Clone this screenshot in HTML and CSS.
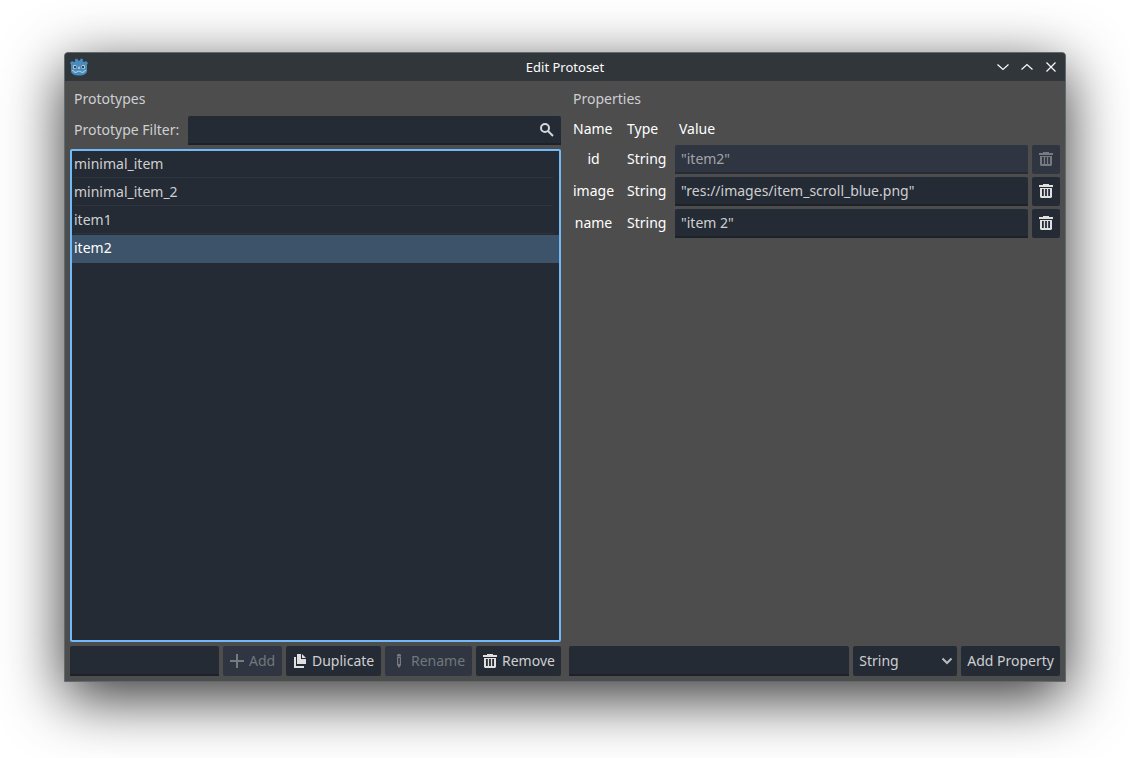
FILE: index.html
```html
<!DOCTYPE html>
<html lang="en">
<head>
<meta charset="utf-8">
<meta name="viewport" content="width=device-width, initial-scale=1">
<title>Edit Protoset</title>
<link rel="stylesheet" href="styles.css">
</head>
<body>
<svg class="sprites" aria-hidden="true">
  <symbol id="trash" viewBox="0 0 16 16"><path fill-rule="evenodd" d="M5 1v1H1v2h14V2h-4V1zM2 5v9l1 1h10l1-1V5zM4 6h1.800v7H4zM7.100 6h1.800v7H7.100zM10.200 6H12v7h-1.800z"/></symbol>
</svg>
<main class="window">
  <header class="titlebar">
    <svg class="logo" viewBox="0 0 18 18" aria-hidden="true">
      <path fill="#478cbf" d="M0 5 2 3l1.800 1 1.400-.6L5 1.200 7.200.5l.9 1.900h1.800l.9-1.900 2.200.7-.2 2.200 1.400.6L16 3l2 2-1 1.800V13c0 2.500-3 4.500-8 4.500S1 15.500 1 13V6.800z"/>
      <circle cx="4.800" cy="9" r="1.900" fill="#dfe8ee"/><circle cx="13.200" cy="9" r="1.900" fill="#dfe8ee"/>
      <circle cx="5" cy="9.100" r="1.300" fill="#414042"/><circle cx="13" cy="9.100" r="1.300" fill="#414042"/>
      <path d="M9 9v1.500" stroke="#dfe8ee" stroke-width="1.200" stroke-linecap="round"/>
      <path d="M2 12.500 4.200 13v1.300h2.800V13.300h4v1h2.800V13l2.200-.5" fill="none" stroke="#c5d9e7" stroke-width=".8"/>
    </svg>
    <h1 class="title">Edit Protoset</h1>
    <div class="window-buttons">
      <button class="window-button" aria-label="Minimize"><svg viewBox="0 0 12 12"><path d="m.5 3.500 5.500 5 5.500-5"/></svg></button>
      <button class="window-button" aria-label="Maximize"><svg viewBox="0 0 12 12"><path d="m.5 8.500 5.500-5 5.500 5"/></svg></button>
      <button class="window-button" aria-label="Close"><svg viewBox="0 0 12 12"><path d="m1.500 1.500 9 9m0-9-9 9"/></svg></button>
    </div>
  </header>
  <div class="panes">
    <section class="pane">
      <h2 class="heading">Prototypes</h2>
      <div class="filter">
        <label class="filter-label" for="filter">Prototype Filter:</label>
        <div class="search">
          <input class="field" id="filter" type="text">
          <svg class="search-icon" viewBox="0 0 16 16" aria-hidden="true"><circle cx="6" cy="6" r="4" /><path d="m9 9 5 5"/></svg>
        </div>
      </div>
      <ul class="list" tabindex="0">
        <li class="item">minimal_item</li>
        <li class="item">minimal_item_2</li>
        <li class="item">item1</li>
        <li class="item selected">item2</li>
      </ul>
      <div class="actions prototype-actions">
        <input class="field" type="text" aria-label="Prototype ID">
        <button class="button" disabled><svg class="icon" viewBox="0 0 16 16"><path d="M7 1h2v6h6v2H9v6H7V9H1V7h6z"/></svg>Add</button>
        <button class="button"><svg class="icon" viewBox="0 0 16 16"><path d="M5 1v10h9V6H9V1zM10 1v4h4zM2 4v11h10v-2H4V4z"/></svg>Duplicate</button>
        <button class="button" disabled><svg class="icon" viewBox="0 0 16 16"><path fill-rule="evenodd" d="M7 1h2l1 1v1.500H6V2zM6 4h4v8l-2 3-2-3zM7.200 5v6h1.600V5z"/></svg>Rename</button>
        <button class="button"><svg class="icon"><use href="#trash"/></svg>Remove</button>
      </div>
    </section>
    <section class="pane">
      <h2 class="heading">Properties</h2>
      <table class="properties">
        <thead>
          <tr><th class="name">Name</th><th class="type">Type</th><th class="value">Value</th><td class="remove"></td></tr>
        </thead>
        <tbody>
          <tr><th class="name">id</th><td class="type">String</td><td><input class="field" type="text" aria-label="id" value="&quot;item2&quot;" disabled></td><td class="remove"><button class="button square" aria-label="Remove id" disabled><svg class="icon"><use href="#trash"/></svg></button></td></tr>
          <tr><th class="name">image</th><td class="type">String</td><td><input class="field" type="text" aria-label="image" value="&quot;res://images/item_scroll_blue.png&quot;"></td><td class="remove"><button class="button square" aria-label="Remove image"><svg class="icon"><use href="#trash"/></svg></button></td></tr>
          <tr><th class="name">name</th><td class="type">String</td><td><input class="field" type="text" aria-label="name" value="&quot;item 2&quot;"></td><td class="remove"><button class="button square" aria-label="Remove name"><svg class="icon"><use href="#trash"/></svg></button></td></tr>
        </tbody>
      </table>
      <div class="actions property-actions">
        <input class="field" type="text" aria-label="Property name">
        <div class="dropdown">
          <select class="button select" aria-label="Property type"><option>String</option></select>
          <svg class="chevron" viewBox="0 0 12 12" aria-hidden="true"><path d="m1.500 3.500 4.500 4.500 4.500-4.500"/></svg>
        </div>
        <button class="button">Add Property</button>
      </div>
    </section>
  </div>
</main>
</body>
</html>
```
FILE: styles.css
```css
* { box-sizing: border-box; }

body {
  margin: 0;
  min-height: 100vh;
  padding: 52px 64px 76px;
  display: flex;
  background: #fff;
  color: #cdcfd2;
  font: 14px/20px "Noto Sans", sans-serif;
}

button, input, select { font: inherit; color: inherit; }
h1, h2 { margin: 0; font-weight: 400; }

.sprites { position: absolute; width: 0; height: 0; }

.window {
  flex: 1;
  min-width: 0;
  display: flex;
  flex-direction: column;
  border: 1px solid #606b71;
  border-radius: 4px 4px 0 0;
  background: #4d4d4d;
  box-shadow: 0 16px 60px rgba(0, 0, 0, .8);
}

.titlebar {
  height: 28px;
  padding: 0 5px;
  display: grid;
  grid-template-columns: 1fr auto 1fr;
  align-items: center;
  border-radius: 3px 3px 0 0;
  background: #31363b;
  color: #fcfcfc;
}
.logo { width: 18px; height: 18px; }
.title { font-size: 13px; }
.window-buttons { display: flex; justify-content: flex-end; gap: 6px; }
.window-button {
  width: 18px;
  height: 18px;
  padding: 3px;
  border: 0;
  background: none;
}
.window-button svg {
  display: block;
  fill: none;
  stroke: currentColor;
  stroke-width: 1.2;
}

.panes {
  flex: 1;
  padding: 5px;
  display: grid;
  grid-template-columns: 1fr 1fr;
  gap: 8px;
}
.pane { min-width: 0; display: flex; flex-direction: column; }
.heading { padding: 3px 4px 7px; font-size: 14px; }

.field {
  width: 100%;
  min-width: 0;
  height: 29px;
  padding: 0 6px;
  display: block;
  border: 0;
  border-bottom: 2px solid #1d2229;
  border-radius: 2px 2px 0 0;
  background: #252b34;
  outline: 0;
}
.field:disabled { background: #303641; border-color: #262b35; }

.button {
  height: 30px;
  padding: 0 6px;
  display: flex;
  align-items: center;
  gap: 4px;
  border: 0;
  border-radius: 2px;
  background: #252b34;
  white-space: nowrap;
}
.button:disabled { background: #303641; color: #73767c; }
.icon { width: 16px; height: 16px; flex: none; fill: #e0e0e0; }
.button:disabled .icon { fill: #777b81; }
.square { width: 28px; height: 29px; padding: 0 6px 1px; }

.filter { display: flex; gap: 9px; padding-left: 4px; }
.filter-label { padding-top: 4px; }
.search { position: relative; flex: 1; }
.search-icon {
  position: absolute;
  top: 6px;
  right: 6px;
  width: 16px;
  height: 16px;
  fill: none;
  stroke: #d5d6d8;
  stroke-width: 2;
}

.list {
  flex: 1;
  margin: 4px 0;
  padding: 0;
  border: 2px solid #70bafa;
  border-radius: 2px;
  background: #252b34;
  list-style: none;
  outline: 0;
}
.item {
  height: 28px;
  padding: 3px 2px;
  background: linear-gradient(#2f353e, #2f353e) 2px 26px / calc(100% - 8px) 1px no-repeat;
}
.item.selected { background: #3d5369; color: #fff; }

.actions { display: grid; gap: 4px; }
.actions .field { height: 30px; }
.prototype-actions { grid-template-columns: 1fr 59px 95px 87px 85px; }
.property-actions { grid-template-columns: 1fr 104px auto; margin-top: auto; }
.dropdown { position: relative; }
.select { width: 100%; appearance: none; }
.chevron {
  position: absolute;
  top: 9px;
  right: 4px;
  width: 12px;
  height: 12px;
  fill: none;
  stroke: #b9bbbe;
  stroke-width: 2;
  pointer-events: none;
}

.properties {
  width: 100%;
  border-spacing: 0;
  table-layout: fixed;
  color: #fff;
}
.properties th, .properties td { padding: 0 0 3px; font-weight: 400; }
.properties .name { width: 49px; padding-bottom: 4px; text-align: center; }
.properties .type { width: 57px; padding: 0 0 4px 9px; text-align: left; }
.properties .remove { width: 32px; padding-left: 4px; }
.properties thead .name { padding: 3px 0 6px 4px; text-align: left; }
.properties thead .type { padding: 3px 0 6px 9px; }
.properties thead .value { padding: 3px 0 6px 4px; text-align: left; }
.properties .field { color: #cdcfd2; }
.properties .field:disabled { color: #a1a4aa; }
```
